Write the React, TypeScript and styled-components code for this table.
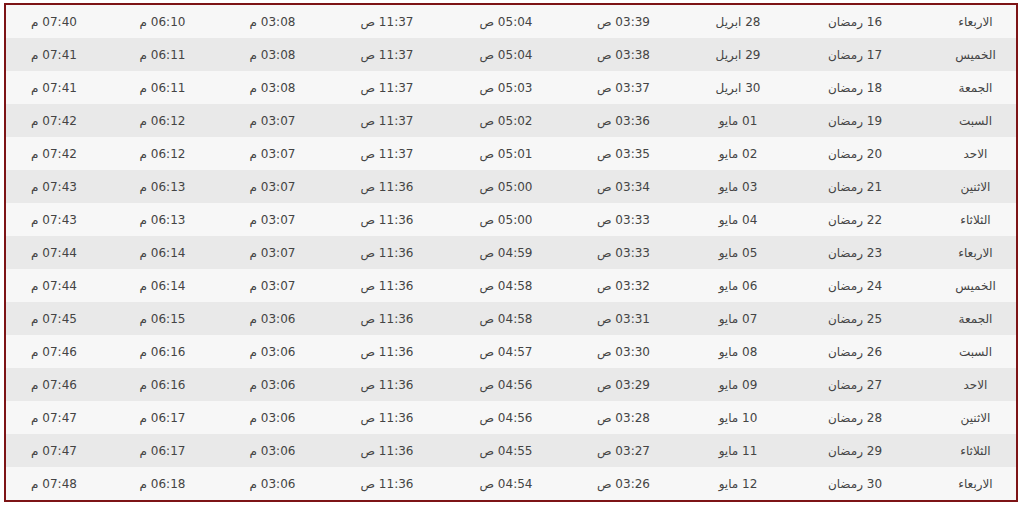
import styled, { createGlobalStyle } from "styled-components";

const GlobalStyle = createGlobalStyle`
  html, body {
    margin: 0;
    padding: 0;
    background: #ffffff;
  }
`;

const days = [
  "الاربعاء",
  "الخميس",
  "الجمعة",
  "السبت",
  "الاحد",
  "الاثنين",
  "الثلاثاء",
];

const fajr = ["03:39", "03:38", "03:37", "03:36", "03:35", "03:34", "03:33", "03:33", "03:32", "03:31", "03:30", "03:29", "03:28", "03:27", "03:26"];
const sunrise = ["05:04", "05:04", "05:03", "05:02", "05:01", "05:00", "05:00", "04:59", "04:58", "04:58", "04:57", "04:56", "04:56", "04:55", "04:54"];
const maghrib = ["06:10", "06:11", "06:11", "06:12", "06:12", "06:13", "06:13", "06:14", "06:14", "06:15", "06:16", "06:16", "06:17", "06:17", "06:18"];
const isha = ["07:40", "07:41", "07:41", "07:42", "07:42", "07:43", "07:43", "07:44", "07:44", "07:45", "07:46", "07:46", "07:47", "07:47", "07:48"];

const pad = (n: number) => (n < 10 ? "0" + n : "" + n);

const rows = fajr.map((_, i) => {
  const g = 28 + i;
  return {
    day: days[i % 7],
    hijri: `${16 + i} رمضان`,
    greg: g <= 30 ? `${g} ابريل` : `${pad(g - 30)} مايو`,
    fajr: `${fajr[i]} ص`,
    sunrise: `${sunrise[i]} ص`,
    dhuhr: `${i < 5 ? "11:37" : "11:36"} ص`,
    asr: `${i < 3 ? "03:08" : i < 9 ? "03:07" : "03:06"} م`,
    maghrib: `${maghrib[i]} م`,
    isha: `${isha[i]} م`,
  };
});

// widths from right to left, the table runs rtl
const widths = [101, 120, 114, 115, 120, 118, 111, 109, 102];

const Wrapper = styled.div`
  margin: 3px 0 0 4px;
  width: 1014px;
  border: 2px solid #7d1416;
  box-sizing: border-box;
`;

const Table = styled.table`
  width: 100%;
  border-collapse: collapse;
  table-layout: fixed;
  direction: rtl;
  font-family: "DejaVu Sans", Tahoma, sans-serif;
  font-size: 12px;
  color: #444444;
`;

const Row = styled.tr<{ $alt: boolean }>`
  height: 33px;
  background: ${(p) => (p.$alt ? "#e9e9e9" : "#f7f7f7")};
`;

const Cell = styled.td<{ $first?: boolean; $last?: boolean }>`
  padding: 0;
  text-align: center;
  vertical-align: middle;
  white-space: nowrap;
  padding-left: ${(p) => (p.$first ? "20px" : "0")};
  padding-right: ${(p) => (p.$last ? "6px" : "0")};
`;

export default function App() {
  return (
    <>
      <GlobalStyle />
      <Wrapper>
        <Table>
          <colgroup>
            {widths.map((w, i) => (
              <col key={i} style={{ width: w }} />
            ))}
          </colgroup>
          <tbody>
            {rows.map((r, i) => (
              <Row key={i} $alt={i % 2 === 1}>
                <Cell $first>{r.day}</Cell>
                <Cell>{r.hijri}</Cell>
                <Cell>{r.greg}</Cell>
                <Cell>{r.fajr}</Cell>
                <Cell>{r.sunrise}</Cell>
                <Cell>{r.dhuhr}</Cell>
                <Cell>{r.asr}</Cell>
                <Cell>{r.maghrib}</Cell>
                <Cell $last>{r.isha}</Cell>
              </Row>
            ))}
          </tbody>
        </Table>
      </Wrapper>
    </>
  );
}
